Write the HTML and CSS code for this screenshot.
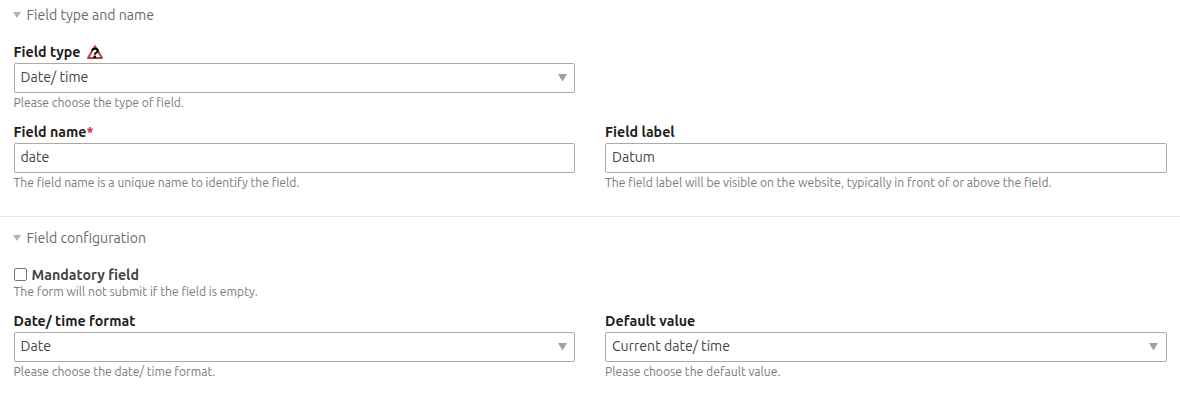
FILE: index.html
```
<!DOCTYPE html>
<html lang="en">
<head>
<meta charset="utf-8">
<title>Form field</title>
<link rel="stylesheet" href="styles.css">
</head>
<body>
<form>
  <section class="group">
    <h2 class="legend"><svg class="toggle" viewBox="0 0 8 6"><path d="M0 0H8L4 6Z"/></svg><span>Field type and name</span></h2>
    <div class="fields">
      <div class="field">
        <div class="label"><span>Field type</span>
          <svg class="wizard" viewBox="0 0 16 14"><path class="wizard-sign" d="M8 1.2 15 13H1Z"/><path class="wizard-mark" d="M5 5.6C5.5 3.2 10.8 3.2 10.8 5.7C10.8 7.6 8 7.4 7.8 9.6"/><rect x="6.5" y="10.6" width="2.6" height="2.4"/></svg>
        </div>
        <div class="control select"><span>Date/ time</span><svg class="arrow" viewBox="0 0 9 8"><path d="M0 0H9L4.5 7.6Z"/></svg></div>
        <p class="hint">Please choose the type of field.</p>
      </div>
      <div class="field start">
        <div class="label"><span>Field name</span><span class="required">*</span></div>
        <div class="control"><span>date</span></div>
        <p class="hint">The field name is a unique name to identify the field.</p>
      </div>
      <div class="field">
        <div class="label"><span>Field label</span></div>
        <div class="control"><span>Datum</span></div>
        <p class="hint">The field label will be visible on the website, typically in front of or above the field.</p>
      </div>
    </div>
  </section>
  <section class="group">
    <h2 class="legend"><svg class="toggle" viewBox="0 0 8 6"><path d="M0 0H8L4 6Z"/></svg><span>Field configuration</span></h2>
    <div class="fields">
      <div class="field check-field">
        <div class="check"><span class="box"></span><span>Mandatory field</span></div>
        <p class="hint">The form will not submit if the field is empty.</p>
      </div>
      <div class="field start">
        <div class="label"><span>Date/ time format</span></div>
        <div class="control select"><span>Date</span><svg class="arrow" viewBox="0 0 9 8"><path d="M0 0H9L4.5 7.6Z"/></svg></div>
        <p class="hint">Please choose the date/ time format.</p>
      </div>
      <div class="field">
        <div class="label"><span>Default value</span></div>
        <div class="control select"><span>Current date/ time</span><svg class="arrow" viewBox="0 0 9 8"><path d="M0 0H9L4.5 7.6Z"/></svg></div>
        <p class="hint">Please choose the default value.</p>
      </div>
    </div>
  </section>
</form>
</body>
</html>
```
FILE: styles.css
```
* { box-sizing: border-box; }
body {
  margin: 0;
  background: #fff;
  color: #444;
  font: 14.1px/20px Ubuntu, "Noto Sans", sans-serif;
}
.group { height: 216px; padding: 5px 13.4px 0 13.6px; }
.group + .group { height: 185px; padding-top: 11px; border-top: 1px solid #e6e6e6; }
.legend {
  display: flex;
  align-items: center;
  gap: 5px;
  height: 20px;
  margin: 0 0 17px;
  color: #6a6a6a;
  font-size: 14.1px;
  font-weight: 400;
}
.toggle { width: 8px; height: 6px; margin-left: -0.6px; margin-right: 0.6px; fill: #b3b3b3; }
.fields { display: grid; grid-template-columns: 1fr 1fr; column-gap: 30px; }
.field { height: 80px; }
.start { grid-column: 1; }
.label {
  display: flex;
  align-items: center;
  height: 20px;
  margin-bottom: 1px;
  color: #1d1d1d;
  font-size: 14.22px;
  font-weight: 700;
}
.required { color: #c33; }
.wizard { width: 16px; height: 14px; margin-left: 6.8px; }
.wizard-sign { fill: #fff; stroke: #b3413e; stroke-width: 2; stroke-linejoin: round; }
.wizard-mark { fill: none; stroke: #000; stroke-width: 2; }
.control {
  display: flex;
  align-items: center;
  justify-content: space-between;
  height: 30px;
  padding: 0 7.4px 2px 6px;
  border: 1px solid #aaa;
  border-radius: 2px;
}
.arrow { width: 9px; height: 8px; margin-top: 2px; fill: #9f9f9f; }
.hint {
  margin: 0;
  color: #7b7b7b;
  font-size: 12.17px;
  line-height: 19px;
  white-space: nowrap;
}
.check-field { height: 46px; }
.check { display: flex; align-items: center; gap: 5px; height: 19px; margin-bottom: -2px; font-size: 14.22px; font-weight: 700; }
.box { width: 13px; height: 13px; border: 1px solid #767676; border-radius: 2px; }
```
